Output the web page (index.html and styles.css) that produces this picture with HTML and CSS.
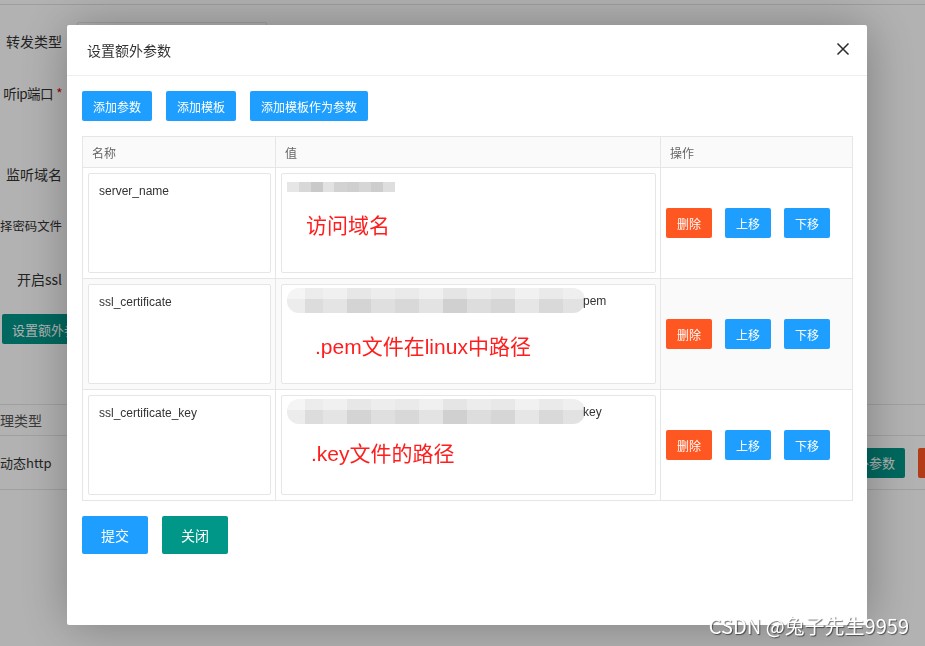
FILE: index.html
```html
<!DOCTYPE html>
<html lang="zh-CN">
<head>
<meta charset="utf-8">
<title>设置额外参数</title>
<link rel="stylesheet" href="styles.css">
</head>
<body>
<div class="page">
  <div class="topbar"></div>
  <div class="form">
    <div class="form-item item-1"><div class="form-label"><span>转发类型</span></div><div class="input"></div></div>
    <div class="form-item item-2"><div class="form-label"><span class="tight">听ip端口 <i class="req">*</i></span></div><div class="input"></div></div>
    <div class="form-item item-3"><div class="form-label"><span>监听域名</span></div><div class="input"></div></div>
    <div class="form-item item-4"><div class="form-label"><span class="narrow">择密码文件</span></div><div class="input"></div></div>
    <div class="form-item item-5"><div class="form-label"><span>开启ssl</span></div></div>
    <div class="form-btn-row"><span class="bg-btn teal">设置额外参数</span></div>
  </div>
  <div class="bg-table">
    <div class="bg-thead"><span>理类型</span></div>
    <div class="bg-row">
      <span class="bg-first">动态http</span>
      <span class="bg-actions"><span class="bg-btn teal">设置额外参数</span><span class="bg-btn orange"></span></span>
    </div>
  </div>
</div>

<div class="shade"></div>

<div class="modal">
  <div class="modal-header">
    <span class="modal-title">设置额外参数</span>
    <span class="modal-close">
      <svg width="14" height="14" viewBox="0 0 14 14"><path d="M1.5 1.5 L12.5 12.5 M12.5 1.5 L1.5 12.5" stroke="#2b2b2b" stroke-width="1.5" fill="none"/></svg>
    </span>
  </div>
  <div class="modal-body">
    <div class="toolbar">
      <span class="btn btn-sm blue">添加参数</span>
      <span class="btn btn-sm blue">添加模板</span>
      <span class="btn btn-sm blue">添加模板作为参数</span>
    </div>

    <div class="param-table">
      <div class="cell th">名称</div>
      <div class="cell th">值</div>
      <div class="cell th">操作</div>

      <div class="cell td"><div class="textarea">server_name</div></div>
      <div class="cell td"><div class="textarea value">
        <div class="blur-strip"></div>
        <div class="note note-1">访问域名</div>
      </div></div>
      <div class="cell td actions">
        <span class="btn btn-sm orange">删除</span><span class="btn btn-sm blue">上移</span><span class="btn btn-sm blue">下移</span>
      </div>

      <div class="cell td stripe"><div class="textarea">ssl_certificate</div></div>
      <div class="cell td stripe"><div class="textarea value">
        <div class="blur-line"><span class="blur-pill"></span><span class="tail">pem</span></div>
        <div class="note note-2">.pem文件在linux中路径</div>
      </div></div>
      <div class="cell td stripe actions">
        <span class="btn btn-sm orange">删除</span><span class="btn btn-sm blue">上移</span><span class="btn btn-sm blue">下移</span>
      </div>

      <div class="cell td"><div class="textarea">ssl_certificate_key</div></div>
      <div class="cell td"><div class="textarea value">
        <div class="blur-line"><span class="blur-pill pill-2"></span><span class="tail">key</span></div>
        <div class="note note-3">.key文件的路径</div>
      </div></div>
      <div class="cell td actions">
        <span class="btn btn-sm orange">删除</span><span class="btn btn-sm blue">上移</span><span class="btn btn-sm blue">下移</span>
      </div>
    </div>

    <div class="footer-btns">
      <span class="btn btn-lg blue">提交</span>
      <span class="btn btn-lg teal">关闭</span>
    </div>
  </div>
</div>

<div class="watermark">CSDN @兔子先生9959</div>
</body>
</html>
```

FILE: styles.css
```css
* { box-sizing: border-box; }
html, body { margin: 0; padding: 0; }
body {
  width: 925px;
  height: 646px;
  overflow: hidden;
  background: #fff;
  font-family: "Liberation Sans", "Noto Sans CJK SC", sans-serif;
  color: #333;
}

/* ---------- background page ---------- */
.page { width: 925px; }
.topbar { height: 5px; border-bottom: 1px solid #e2e2e2; }
.form { display: flex; flex-direction: column; }
.form-item { display: flex; align-items: center; height: 38px; }
.item-1 { margin-top: 17px; }
.item-2 { margin-top: 14px; }
.item-3 { margin-top: 43px; }
.item-4 { margin-top: 14px; }
.item-5 { margin-top: 15px; }
.form-label {
  width: 62px;
  display: flex;
  justify-content: flex-end;
  white-space: nowrap;
  font-size: 14px;
  line-height: 20px;
  color: #333;
  font-family: "Noto Sans CJK SC", sans-serif;
}
.form-label .tight { letter-spacing: -0.6px; font-size: 13.5px; }
.form-label .narrow { font-size: 12.4px; }
.req { font-style: normal; color: #d00; margin-left: 1px; }
.input {
  margin-left: 15px;
  width: 190px;
  height: 38px;
  border: 1px solid #e6e6e6;
  border-radius: 2px;
}
.form-btn-row { margin-top: 16px; padding-left: 2px; display: flex; }
.bg-btn {
  display: inline-flex;
  align-items: center;
  height: 30px;
  padding: 0 10px;
  font-size: 13px;
  color: #fff;
  border-radius: 2px;
  white-space: nowrap;
  font-family: "Noto Sans CJK SC", sans-serif;
}
.bg-btn.teal { background: #009688; }
.bg-btn.orange { background: #FF5722; width: 46px; }

.bg-table { margin-top: 60px; border-top: 1px solid #e6e6e6; }
.bg-thead {
  height: 31px;
  display: flex;
  align-items: center;
  border-bottom: 1px solid #e6e6e6;
  font-size: 14px;
  color: #555;
  font-family: "Noto Sans CJK SC", sans-serif;
}
.bg-row {
  height: 54px;
  display: flex;
  align-items: center;
  border-bottom: 1px solid #e6e6e6;
  font-size: 13px;
  color: #333;
  font-family: "Noto Sans CJK SC", sans-serif;
  white-space: nowrap;
}
.bg-first { flex: 0 0 807px; }
.bg-actions { display: flex; gap: 13px; flex: none; }

.shade {
  position: fixed;
  inset: 0;
  background: rgba(0, 0, 0, 0.3);
}

/* ---------- modal ---------- */
.modal {
  position: fixed;
  left: 67px;
  top: 25px;
  width: 800px;
  height: 600px;
  background: #fff;
  border-radius: 2px;
  box-shadow: 1px 1px 50px rgba(0, 0, 0, 0.3);
  font-family: "Liberation Sans", "Noto Sans CJK SC", sans-serif;
}
.modal-header {
  height: 51px;
  border-bottom: 1px solid #eee;
  display: flex;
  align-items: center;
  justify-content: space-between;
  padding: 0 17px 0 20px;
}
.modal-title {
  font-size: 14px;
  color: #333;
  font-family: "Noto Sans CJK SC", sans-serif;
  line-height: 20px;
}
.modal-close { display: flex; width: 14px; height: 14px; margin-top: -2px; }

.modal-body { padding: 15px; }
.toolbar { display: flex; gap: 14px; height: 30px; }

.btn {
  display: inline-flex;
  align-items: center;
  justify-content: center;
  color: #fff;
  border-radius: 2px;
  white-space: nowrap;
  font-family: "Noto Sans CJK SC", sans-serif;
}
.btn-sm { height: 30px; padding: 0 11px; font-size: 12px; }
.btn-lg { height: 38px; width: 66px; font-size: 14px; }
.blue { background: #1E9FFF; }
.orange { background: #FF5722; }
.teal { background: #009688; }

.param-table {
  margin-top: 15px;
  width: 771px;
  display: grid;
  grid-template-columns: 193px 385px 192px;
  border-left: 1px solid #e6e6e6;
  border-top: 1px solid #e6e6e6;
}
.cell {
  border-right: 1px solid #e6e6e6;
  border-bottom: 1px solid #e6e6e6;
}
.th {
  height: 31px;
  background: #fafafa;
  display: flex;
  align-items: center;
  padding-left: 9px;
  font-size: 12px;
  color: #666;
  font-family: "Noto Sans CJK SC", sans-serif;
}
.td { height: 111px; padding: 5px 4px 5px 5px; }
.stripe { background: #fafafa; }

.textarea {
  height: 100px;
  background: #fff;
  border: 1px solid #e6e6e6;
  border-radius: 2px;
  padding: 9px 10px;
  font-size: 12px;
  line-height: 16px;
  color: #333;
}
.textarea.value { padding: 8px 5px; }

.blur-strip {
  width: 108px;
  height: 10px;
  background:
    linear-gradient(90deg,
      #e6e6e6 0 12px, #d8d8d8 12px 24px, #c9c9c9 24px 36px, #e2e2e2 36px 47px,
      #d2d2d2 47px 60px, #cfcfcf 60px 72px, #d6d6d6 72px 84px, #cdcdcd 84px 96px, #dedede 96px 108px);
}
.blur-line {
  display: flex;
  align-items: center;
  margin-top: -5px;
  height: 25px;
}
.blur-pill {
  width: 298px;
  height: 25px;
  border-radius: 12px;
  background:
    linear-gradient(to bottom, rgba(255,255,255,0.45) 0 45%, rgba(255,255,255,0) 45%),
    linear-gradient(90deg,
      #ececec 0 18px, #dcdcdc 18px 36px, #e4e4e4 36px 60px, #d4d4d4 60px 84px,
      #dfdfdf 84px 108px, #d8d8d8 108px 132px, #e3e3e3 132px 156px, #d0d0d0 156px 180px,
      #dddddd 180px 204px, #d6d6d6 204px 228px, #e6e6e6 228px 252px, #d9d9d9 252px 276px, #e2e2e2 276px 298px);
}
.pill-2 { width: 298px; }
.tail { margin-left: -2px; font-size: 12px; color: #333; }

.note {
  font-size: 21px;
  line-height: 28px;
  color: #ff1e1e;
  white-space: nowrap;
  font-family: "Liberation Sans", "Noto Sans CJK SC", sans-serif;
}
.note-1 { margin: 20px 0 0 19px; }
.note-2 { margin: 20px 0 0 28px; }
.note-3 { margin: 16px 0 0 24px; }

.actions {
  display: flex;
  align-items: center;
  gap: 13px;
  padding: 0 0 0 5px;
}
.actions .btn { width: 46px; padding: 0; }

.footer-btns { margin-top: 15px; display: flex; gap: 14px; }

.watermark {
  position: fixed;
  right: 16px;
  top: 612px;
  font-size: 20px;
  line-height: 28px;
  color: #fff;
  text-shadow: 1px 1px 1px rgba(0, 0, 0, 0.55);
  font-family: "Noto Sans CJK SC", sans-serif;
  white-space: nowrap;
}
```
